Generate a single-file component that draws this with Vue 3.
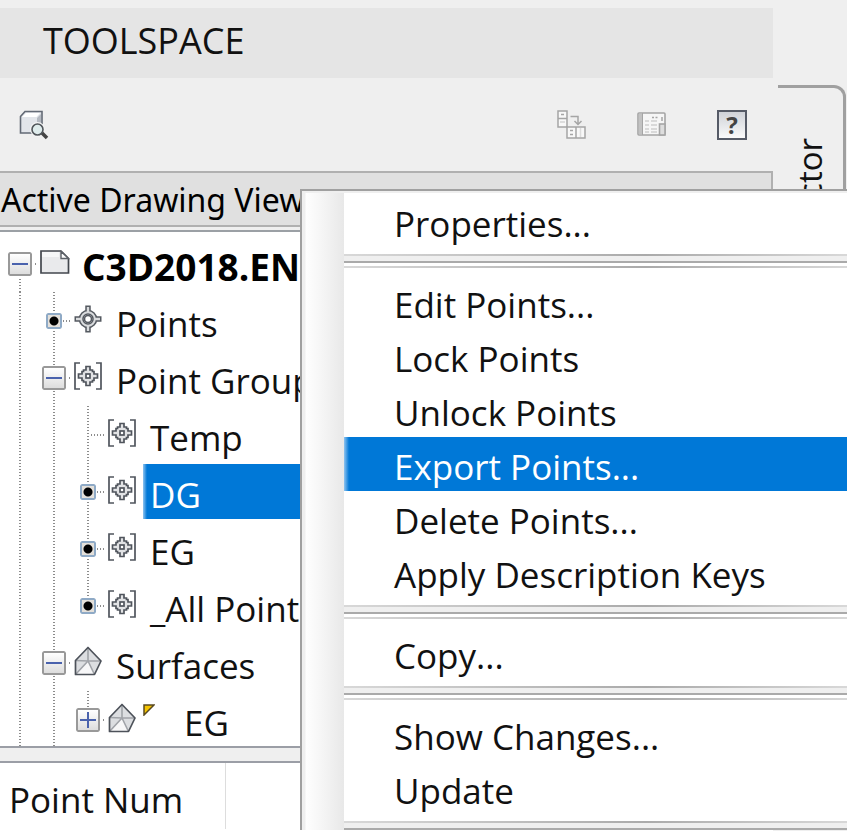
<script setup>
import { ref } from 'vue'

const selected = ref('DG')

const nodes = [
  { id: 'root', label: 'C3D2018.EN', depth: 0, toggle: 'minus', up: false, down: true, icon: 'drawing', bold: true },
  { id: 'points', label: 'Points', depth: 1, toggle: 'dot', up: true, down: true, icon: 'point' },
  { id: 'groups', label: 'Point Groups', depth: 1, toggle: 'minus', up: true, down: true, icon: 'group' },
  { id: 'Temp', label: 'Temp', depth: 2, toggle: '', up: true, down: true, icon: 'group' },
  { id: 'DG', label: 'DG', depth: 2, toggle: 'dot', up: true, down: true, icon: 'group' },
  { id: 'EG', label: 'EG', depth: 2, toggle: 'dot', up: true, down: true, icon: 'group' },
  { id: 'All', label: '_All Points', depth: 2, toggle: 'dot', up: true, down: false, icon: 'group' },
  { id: 'surfaces', label: 'Surfaces', depth: 1, toggle: 'minus', up: true, down: true, icon: 'surface' },
  { id: 'sEG', label: 'EG', depth: 2, toggle: 'plus', up: true, down: false, icon: 'surface', flag: true },
]

const menu = [
  ['Properties...'],
  ['Edit Points...', 'Lock Points', 'Unlock Points', 'Export Points...', 'Delete Points...', 'Apply Description Keys'],
  ['Copy...'],
  ['Show Changes...', 'Update'],
]
const active = ref('Export Points...')
</script>

<template>
  <div class="window">
    <main class="palette">
      <h1 class="title">TOOLSPACE</h1>

      <div class="toolbar">
        <button class="tool" aria-label="Preview">
          <svg width="30" height="30" viewBox="0 0 30 30">
            <path d="M1.5 6.5L6 1.5H23V18L18 23H1.5Z" fill="#e2e5ea" stroke="#636a75" stroke-width="1.6" />
            <path d="M3 7L7 3H21L17.500 7Z" fill="#fff" />
            <path d="M18 8L22 4V17L18 21Z" fill="#b4b9c1" />
            <circle cx="18.500" cy="19.500" r="7.500" fill="#f4f4f4" />
            <path d="M23 23L28 28" stroke="#444" stroke-width="3.500" />
            <circle cx="18.500" cy="19.500" r="5.500" fill="#dfecec" stroke="#50555a" stroke-width="1.600" />
          </svg>
        </button>
        <span class="spacer"></span>
        <button class="tool" aria-label="Panorama order">
          <svg width="30" height="30" viewBox="0 0 30 30" fill="none" stroke="#a5a5a5" stroke-width="1.500">
            <rect x="1" y="1" width="9" height="16" fill="#f8f8f8" />
            <path d="M1 8.500H10M4 4.500H7" />
            <path d="M3 12H8" stroke="#d5d5d5" />
            <path d="M13.500 6.500H21V14M17.500 11L21 14.500L24.500 11" />
            <rect x="10" y="17" width="18" height="11" fill="#f8f8f8" />
            <path d="M19 17V28M13 20.500H16M13 24.500H16" />
            <path d="M23.500 18V27" stroke="#dcdcdc" />
          </svg>
        </button>
        <button class="tool" aria-label="Panorama">
          <svg width="30" height="30" viewBox="0 0 30 30" fill="none" stroke="#a5a5a5">
            <rect x="1" y="3" width="27" height="22" rx="1" fill="#f6f6f6" stroke-width="1.600" />
            <path d="M3.500 4V24" stroke="#c2c2c2" stroke-width="3" />
            <path d="M5.500 3V25" />
            <path d="M8 11H12M14 11H20M8 15H12M14 15H20M8 19H12M14 19H20M8 22H12M14 22H20" stroke="#cfcfcf" stroke-width="1.500" />
            <path d="M15 7.500H17M18.500 7.500H20.500M25 7V11" stroke-width="1.500" />
            <rect x="22.500" y="14" width="5.500" height="11" fill="#ddd" stroke-width="1.600" />
          </svg>
        </button>
        <button class="tool help" aria-label="Help">?</button>
      </div>

      <button class="view">Active Drawing View</button>

      <ul class="tree">
        <li v-for="n in nodes" :key="n.id" class="node">
          <span v-for="d in n.depth" :key="d" class="cell full"></span>
          <span class="cell" :class="{ up: n.up, down: n.down, across: true }">
            <button v-if="n.toggle" class="toggle" :class="n.toggle" :aria-label="'Toggle ' + n.label"></button>
          </span>
          <span class="icon">
            <svg v-if="n.icon === 'drawing'" width="30" height="24" viewBox="0 0 30 24">
              <path d="M1 1H21L28.500 8.500V23H1Z" fill="#e9eaec" stroke="#43474e" stroke-width="1.700" />
              <path d="M2 2H19V7H2Z" fill="#f6f7f8" />
              <path d="M21 1.500V8.500H28.500Z" fill="#fff" stroke="#5c6168" stroke-width="1.400" />
            </svg>
            <svg v-else-if="n.icon === 'point'" width="28" height="28" viewBox="0 0 28 28" fill="none">
              <path d="M14 0.500V8M14 20V27.500M0.500 14H8M20 14H27.500" stroke="#555a61" stroke-width="5.500" />
              <circle cx="14" cy="14" r="6.800" stroke="#555a61" stroke-width="5" />
              <path d="M14 2V8M14 20V26M2 14H8M20 14H26" stroke="#d9dbdd" stroke-width="2.400" />
              <circle cx="14" cy="14" r="6.800" stroke="#d9dbdd" stroke-width="2" />
              <circle cx="14" cy="14" r="3.500" fill="#fff" stroke="#555a61" stroke-width="1.600" />
            </svg>
            <svg v-else-if="n.icon === 'group'" width="28" height="28" viewBox="0 0 28 28" fill="none" stroke="#50555d" stroke-width="1.700">
              <path d="M6 1H1V27H6M22 1H27V27H22" />
              <path d="M12 4.500H16V8H18.500V9.500H20V12H23.500V16H20V18.500H18.500V20H16V23.500H12V20H9.500V18.500H8V16H4.500V12H8V9.500H9.500V8H12Z" fill="#e2e3e5" />
              <rect x="12" y="12" width="4" height="4" fill="#fff" />
            </svg>
            <svg v-else width="28" height="30" viewBox="0 0 28 30" fill="none">
              <path d="M14 1.500L27 15L20.500 28.500H1.500V14.500Z" fill="#dcdee1" />
              <path d="M14 15L20.500 28.500H1.500Z" fill="#f7f7f8" />
              <path d="M14 1.500V15L1.500 14.500M14 15H27M14 15L20.500 28.500M14 15L1.500 28.500" stroke="#a0a3a8" stroke-width="1.600" />
              <path d="M14 1.500L27 15L20.500 28.500H1.500V14.500Z" stroke="#4d525a" stroke-width="1.700" stroke-linejoin="round" />
            </svg>
          </span>
          <svg v-if="n.flag" class="flag" width="12" height="12" viewBox="0 0 12 12">
            <path d="M1 1H11L1 11Z" fill="#f5c400" stroke="#5a4a20" stroke-width="1.500" />
          </svg>
          <span
            class="label"
            :class="{ bold: n.bold, selected: selected === n.id }"
            @click="selected = n.id"
          >{{ n.label }}</span>
        </li>
      </ul>

      <div class="splitter"></div>

      <div class="list">
        <span class="column">Point Num</span>
      </div>
    </main>

    <aside class="tabs">
      <button class="tab">Prospector</button>
    </aside>

    <div class="menu" role="menu">
      <template v-for="(group, g) in menu" :key="g">
        <button
          v-for="item in group"
          :key="item"
          class="item"
          :class="{ active: active === item }"
          role="menuitem"
          @mouseenter="active = item"
        >{{ item }}</button>
        <div class="separator" role="separator"><i></i></div>
      </template>
    </div>
  </div>
</template>

<style>
body {
  margin: 0;
  background: #fff;
}
</style>

<style scoped>
* {
  box-sizing: border-box;
}
button {
  border: 0;
  background: none;
  padding: 0;
  margin: 0;
  font: inherit;
  color: inherit;
}
.window {
  position: relative;
  display: flex;
  height: 100vh;
  overflow: hidden;
  background: #efefef;
  color: #111;
  font: 35px/50px "Open Sans", "Noto Sans", sans-serif;
  white-space: nowrap;
}
.palette {
  flex: 1;
  min-width: 0;
  display: flex;
  flex-direction: column;
  padding-top: 8px;
}
.title {
  margin: 0;
  padding: 0 43px;
  height: 70px;
  font-size: 36px;
  font-weight: 400;
  line-height: 66px;
  background: #e5e5e5;
}
.toolbar {
  display: flex;
  align-items: center;
  gap: 50px;
  height: 93px;
  padding: 0 26px 0 19px;
}
.spacer {
  flex: 1;
}
.tool {
  display: flex;
  width: 30px;
  height: 30px;
}
.help {
  justify-content: center;
  border: 2px solid #555a66;
  background: linear-gradient(#cfd2d8, #fafafa);
  font: bold 24px/26px "Noto Sans", sans-serif;
  color: #444;
}
.view {
  height: 56px;
  padding: 2px 1px 0;
  border: 2px solid #b0b0b0;
  border-left: 0;
  background: #e0e0e0;
  font: 32px/50px "Noto Sans", sans-serif;
  text-align: left;
  color: #000;
}
.tree {
  flex: 1;
  min-height: 0;
  margin: 3px 0 0;
  padding: 3px 0 0 3px;
  overflow: hidden;
  list-style: none;
  background: #fff;
  border-top: 2px solid #9ba0a5;
}
.node {
  display: flex;
  align-items: center;
  height: 57px;
}
.cell {
  --v: repeating-linear-gradient(#8c8c8c 0 1px, #fff 1px 3px);
  --h: repeating-linear-gradient(90deg, #8c8c8c 0 1px, #fff 1px 3px);
  flex: none;
  display: flex;
  align-items: center;
  justify-content: center;
  width: 34px;
  height: 57px;
  background-repeat: no-repeat;
}
.full {
  background-image: var(--v);
  background-size: 2px 100%;
  background-position: 16px 0;
}
.across {
  background-image: var(--h);
  background-size: 17px 2px;
  background-position: 17px 28px;
}
.across.up {
  background-image: var(--v), var(--h);
  background-size: 2px 28px, 17px 2px;
  background-position: 16px 0, 17px 28px;
}
.across.down {
  background-image: var(--v), var(--h);
  background-size: 2px 28px, 17px 2px;
  background-position: 16px 29px, 17px 28px;
}
.across.up.down {
  background-size: 2px 100%, 17px 2px;
  background-position: 16px 0, 17px 28px;
}
.toggle {
  width: 24px;
  height: 24px;
  border: 2px solid #999;
  border-radius: 2px;
  outline: 1px solid #fff;
  background: linear-gradient(#4a62ad, #4a62ad) center / 16px 2px no-repeat, linear-gradient(#fff, #ddd);
}
.toggle.plus {
  background: linear-gradient(#4a62ad, #4a62ad) center / 16px 2px no-repeat,
    linear-gradient(#4a62ad, #4a62ad) center / 2px 16px no-repeat, linear-gradient(#fff, #ddd);
}
.toggle.dot {
  width: 16px;
  height: 16px;
  border-color: #8faac6;
  background: radial-gradient(circle, #000 4px, transparent 5px), #e4e0da;
}
.icon {
  flex: none;
  display: flex;
  width: 38px;
  padding: 0 0 3px 3px;
}
.flag {
  flex: none;
  margin-right: 22px;
  margin-bottom: 20px;
}
.label {
  flex: 1;
  height: 55px;
  padding: 6px 7px 0;
  line-height: 50px;
}
.bold {
  font-size: 37px;
  font-weight: 700;
  color: #000;
}
.selected {
  background: linear-gradient(90deg, #8fc4f0, #0078d7 4px);
  color: #fff;
}
.splitter {
  height: 17px;
  border: solid #9b9ea6;
  border-width: 2px 0;
  background: #efefef;
}
.list {
  height: 68px;
  background: #fff;
}
.column {
  display: block;
  width: 226px;
  height: 66px;
  padding: 12px 9px 0;
  border-right: 1px solid #ddd;
}
.tabs {
  width: 74px;
  padding: 85px 1px 0 5px;
}
.tab {
  width: 100%;
  height: 300px;
  padding: 50px 2px 0 0;
  border: 3px solid #a0a0a0;
  border-left: 0;
  border-radius: 0 12px 0 0;
  font-size: 33px;
  line-height: 40px;
  writing-mode: sideways-lr;
  text-align: right;
}
.menu {
  position: absolute;
  top: 189px;
  right: 0;
  bottom: 1px;
  left: 300px;
  display: flex;
  flex-direction: column;
  padding: 3px 0 0 42px;
  overflow: hidden;
  border: solid #a0a0a0;
  border-width: 2px 0 0 2px;
  background: linear-gradient(#efefef, #efefef) 0 0 / 100% 2px no-repeat,
    linear-gradient(90deg, #efefef 0 3px, #fefefe 4px, #f4f4f4 22px, #e8e8e8 42px, #fff 42px);
}
.item {
  flex: none;
  height: 54px;
  padding: 5px 0 0 50px;
  line-height: 49px;
  text-align: left;
}
.item.active {
  background: linear-gradient(90deg, #8fc4f0, #0078d7 5px);
  color: #fff;
}
.separator {
  flex: none;
  height: 27px;
  padding-top: 6px;
}
.separator i {
  display: block;
  height: 14px;
  background: linear-gradient(#aaa, #aaa) 0 7px / 100% 2px no-repeat,
    linear-gradient(90deg, #d8d8d8, #aaa 60%, #d8d8d8) 0 0 / 100% 2px no-repeat,
    linear-gradient(90deg, #d8d8d8, #aaa 60%, #d8d8d8) 0 12px / 100% 2px no-repeat,
    linear-gradient(#efefef, #efefef) 0 0 / 100% 8px no-repeat;
}
</style>
